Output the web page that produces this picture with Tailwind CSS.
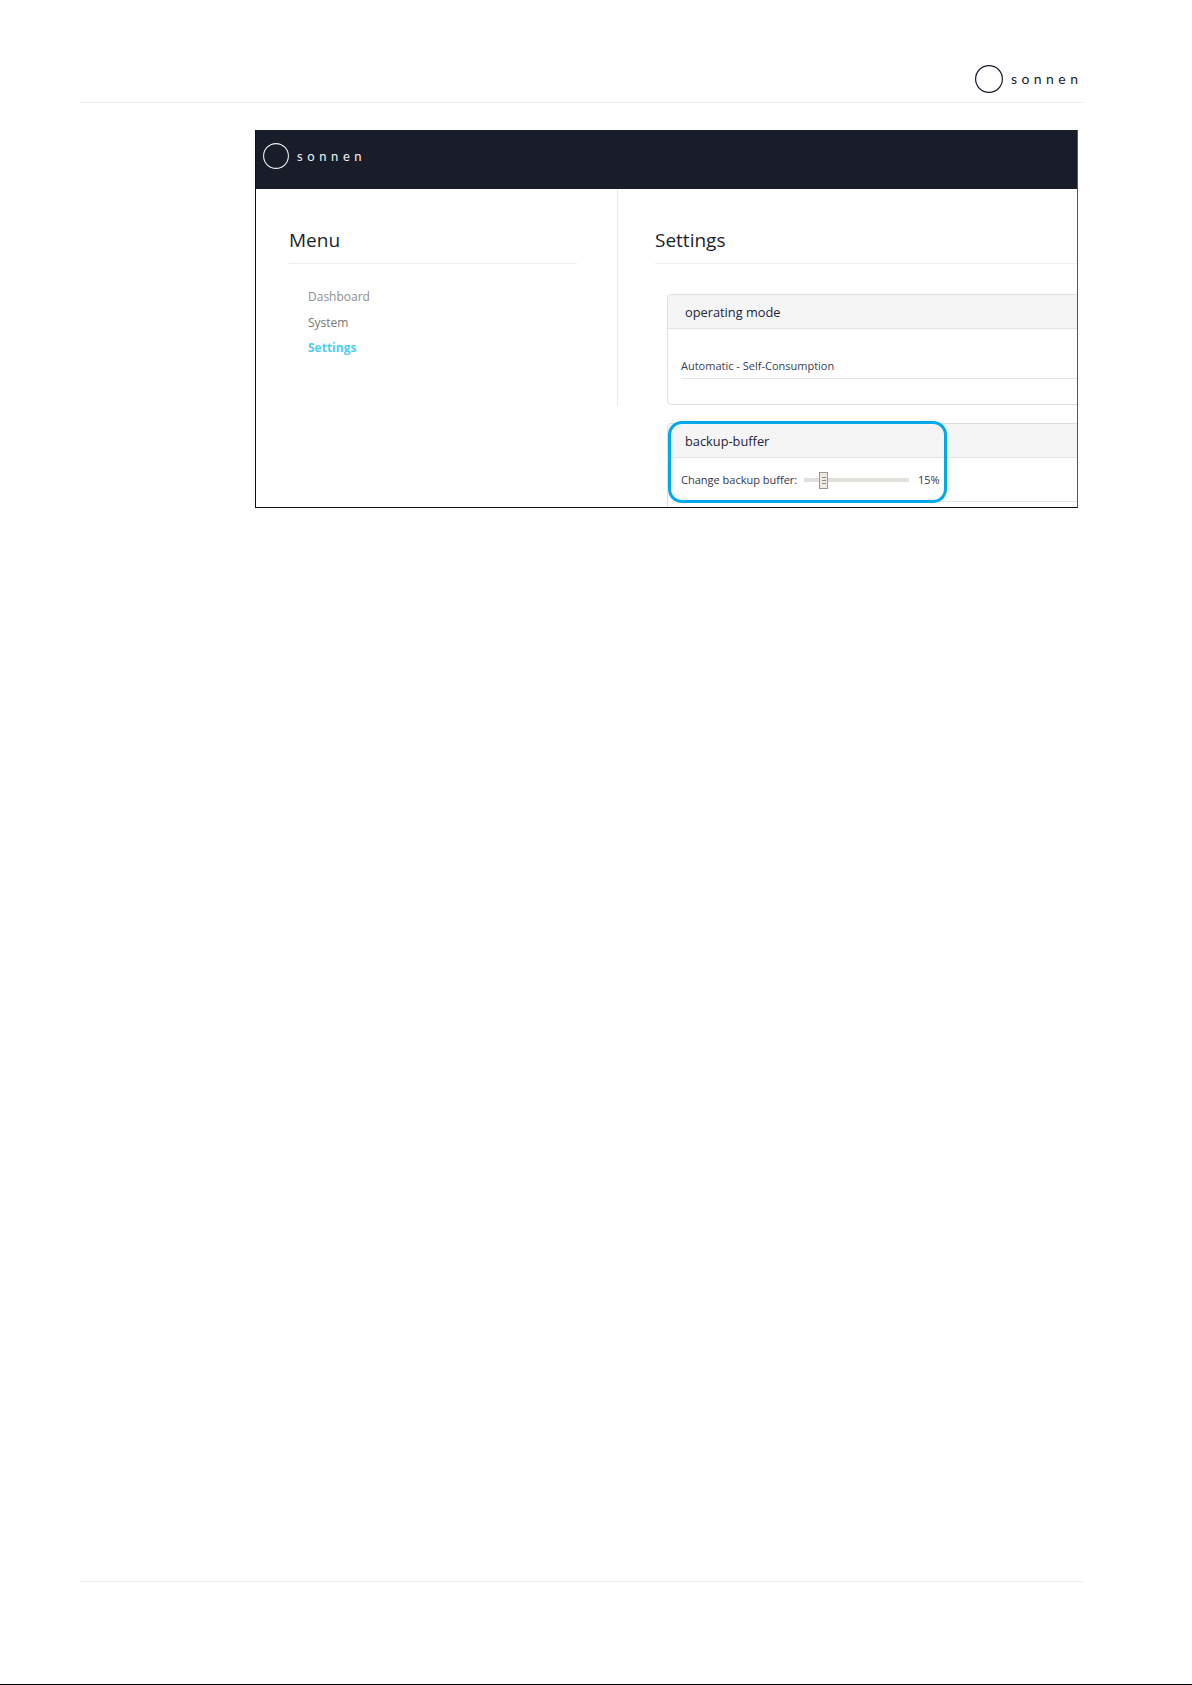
<!DOCTYPE html>
<html>
<head>
<meta charset="utf-8">
<script src="https://cdn.jsdelivr.net/npm/@tailwindcss/browser@4"></script>
</head>
<body class="bg-white">
<div class="w-[1192px] h-[1685px] flex flex-col font-['Open_Sans',sans-serif] overflow-hidden">
  <header class="ml-[79px] w-[1004px] h-[103px] shrink-0 border-b border-[#ececec] flex items-end justify-end pr-[5px] pb-[9px]">
    <div class="flex items-center gap-[8px]">
      <svg class="w-[28px] h-[28px]" viewBox="0 0 28 28"><circle cx="14" cy="14" r="13.4" fill="none" stroke="#1a1d2b" stroke-width="1.2"/></svg>
      <span class="text-[14px] leading-none tracking-[4.45px] mr-[-4.45px] text-[#1a1d2b] font-['Lato',sans-serif]">sonnen</span>
    </div>
  </header>

  <div class="relative ml-[255px] mt-[27px] w-[823px] h-[378px] shrink-0 border-l border-b border-r border-l-[#111] border-b-[#111] border-r-[#555] overflow-hidden">
    <div class="h-[59px] bg-[#191c29] flex items-center pl-[8px] pb-[7px] gap-[8px] -ml-px">
      <svg class="w-[26px] h-[26px]" viewBox="0 0 26 26"><circle cx="13" cy="13" r="12.4" fill="none" stroke="#f2f2f2" stroke-width="1.1"/></svg>
      <span class="text-[13px] leading-none tracking-[4.6px] text-[#f0f0f0] font-['Lato',sans-serif]">sonnen</span>
    </div>
    <div class="flex items-start">
      <aside class="w-[362px] h-[217px] shrink-0 border-r border-[#e8e8e8] pl-[33px] pr-[40px]">
        <h2 class="h-[75px] pt-[35px] text-[19px] leading-[32px] text-[#1c1f2b] border-b border-[#eeeeee] font-medium">Menu</h2>
        <ul class="pl-[19px] pt-[20px] text-[12px] leading-[25.5px]">
          <li class="text-[#8f8f8f]">Dashboard</li>
          <li class="text-[#777]">System</li>
          <li class="text-[#4fcdf0] font-bold">Settings</li>
        </ul>
      </aside>
      <main class="w-[461px] shrink-0 pl-[37px]">
        <h2 class="h-[75px] pt-[35px] text-[19px] leading-[32px] text-[#1c1f2b] border-b border-[#eeeeee] font-medium">Settings</h2>
        <section class="mt-[30px] ml-[12px] w-[430px] h-[111px] border border-[#dedede] rounded-[4px]">
          <h3 class="h-[34px] px-[17px] bg-[#f5f5f5] border-b border-[#e4e4e4] text-[12.8px] leading-[34px] font-medium text-[#23263a] rounded-t-[4px]">operating mode</h3>
          <div class="ml-[13px] h-[50px] border-b border-[#e4e4e4] pt-[29px] text-[11px] leading-[16px] text-[#3a3d52]">Automatic - Self-Consumption</div>
        </section>
        <section class="mt-[18px] ml-[12px] w-[430px] h-[110px] border border-[#dedede] rounded-[4px]">
          <h3 class="h-[34px] px-[17px] bg-[#f5f5f5] border-b border-[#e4e4e4] text-[12.8px] leading-[34px] font-medium text-[#23263a] rounded-t-[4px]">backup-buffer</h3>
          <div class="ml-[13px] h-[44px] border-b border-[#e4e4e4] flex items-center text-[11px] text-[#33364a]">
            <span class="w-[123px] shrink-0 pt-[2px]">Change backup buffer:</span>
            <span class="relative w-[105px] h-[4px] bg-[#e3dfda] shrink-0">
              <span class="absolute left-[15px] -top-[6px] w-[9px] h-[17px] bg-[#ece9e4] border border-[#9c9890] flex flex-col justify-center gap-[2px] px-[1.5px]">
                <span class="block h-px bg-[#8d8a84]"></span>
                <span class="block h-px bg-[#8d8a84]"></span>
                <span class="block h-px bg-[#8d8a84]"></span>
              </span>
            </span>
            <span class="ml-[9px] pt-[2px]">15%</span>
          </div>
        </section>
      </main>
    </div>
    <div class="absolute left-[412px] top-[291px] w-[279px] h-[82px] border-[3px] border-[#00a8ec] rounded-[14px]"></div>
  </div>

  <div class="mt-auto ml-[79px] w-[1004px] border-t border-[#ececec] h-[103px] shrink-0"></div>
  <div class="h-[1px] bg-black shrink-0"></div>
</div>
</body>
</html>
